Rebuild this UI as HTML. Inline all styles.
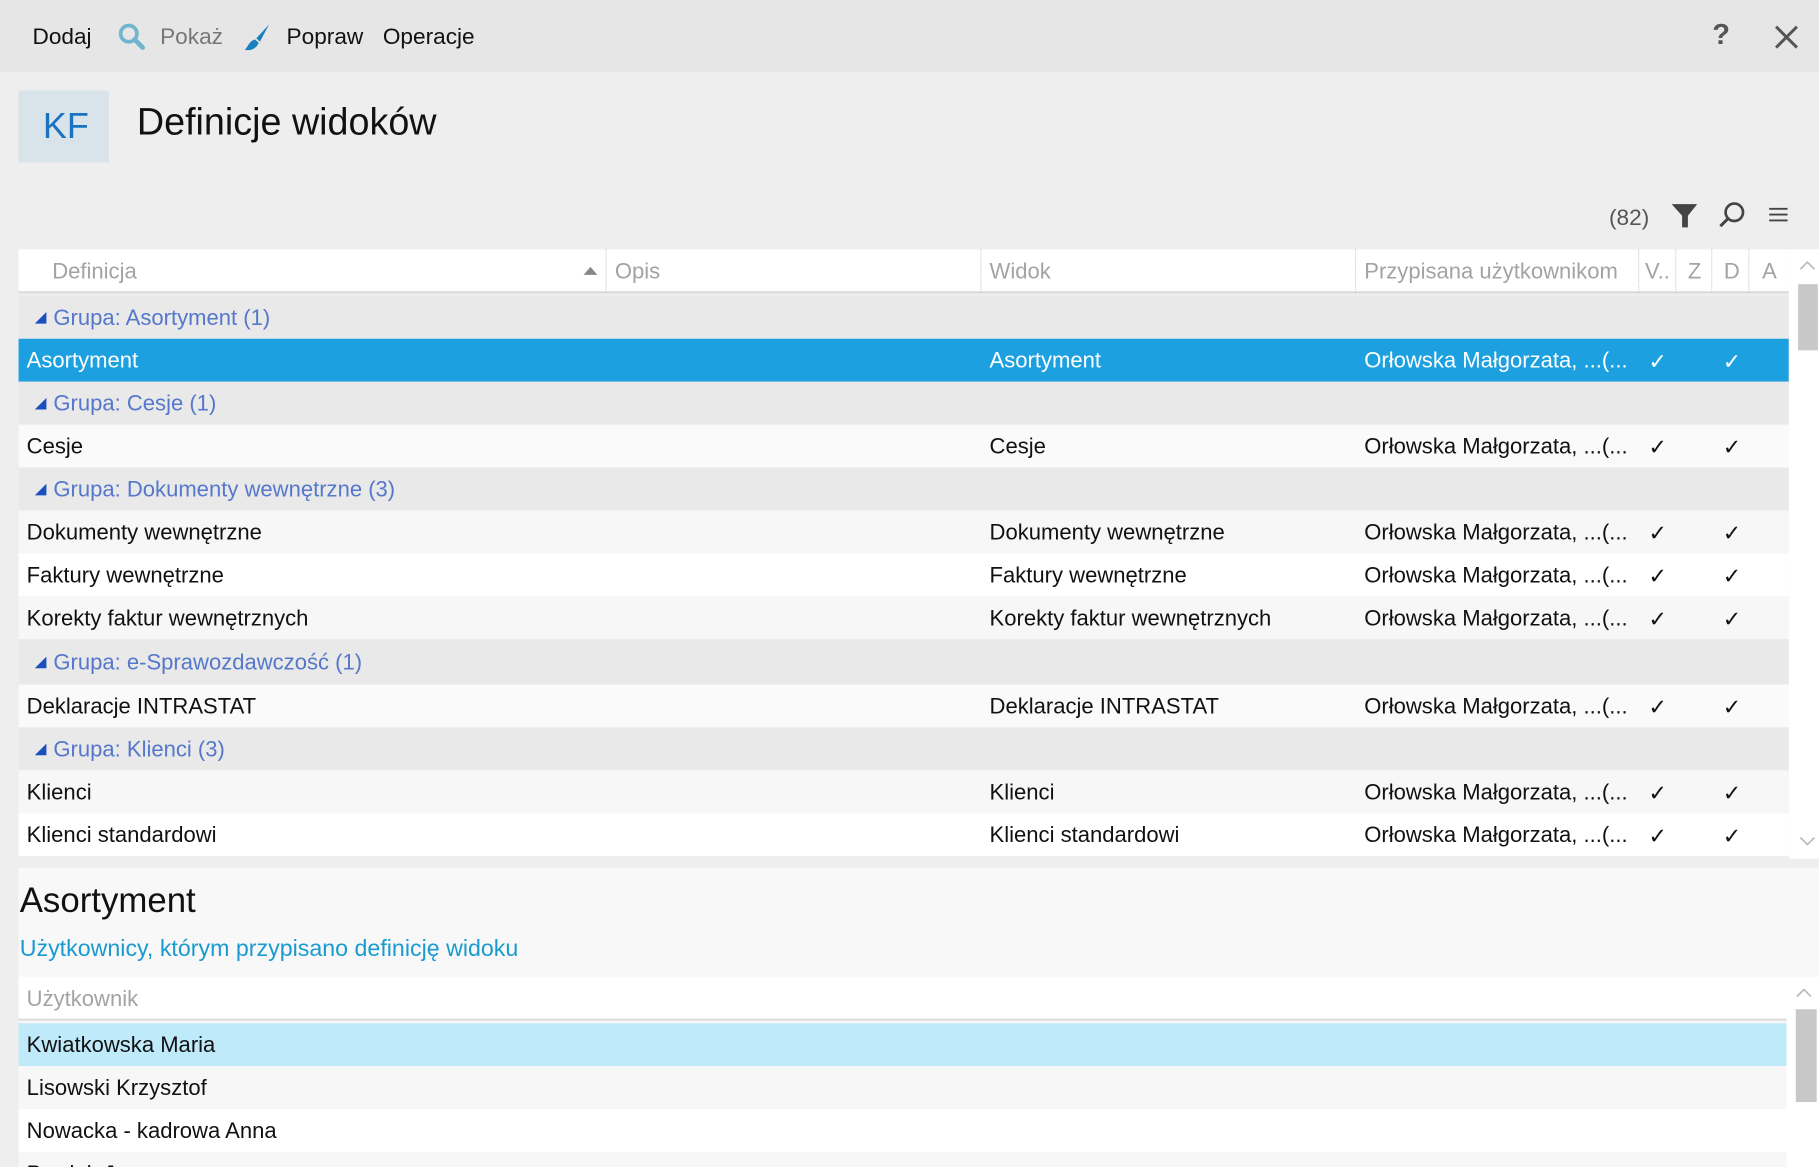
<!DOCTYPE html>
<html><head><meta charset="utf-8"><style>
html,body{margin:0;padding:0;width:1819px;height:1167px;overflow:hidden;background:#eeeeee}
#w{position:absolute;left:0;top:0;width:1568px;height:1006px;transform:scale(1.16007);transform-origin:0 0;font-family:"Liberation Sans",sans-serif;background:#eeeeee;overflow:hidden}
.a{position:absolute;white-space:nowrap}
.tb{left:0;top:0;width:1568px;height:62px;background:#e6e6e6}
.t{font-size:19.5px;color:#111;top:21px}
.row{position:absolute;left:16px;width:1526px;height:37px}
.row span{position:absolute;top:9px;font-size:19px;color:#111;white-space:nowrap}
.g{background:#e9e9e9}
.g span{color:#5577cc;left:30px}
.g i{position:absolute;left:14px;top:14px;width:0;height:0;border-left:10px solid transparent;border-bottom:10px solid #1a4fc0}
.h{font-size:19px;color:#a3a3a3;top:224px}
.sep{position:absolute;top:215px;height:37px;border-left:1px dotted #ccc}
.ck{font-size:18px}
</style></head><body><div id="w">
<div class="a tb"></div>
<div class="a t" style="left:28px">Dodaj</div>
<svg class="a" style="left:101px;top:19px" width="26" height="26" viewBox="0 0 26 26"><circle cx="10" cy="10" r="7" fill="none" stroke="#6fb6cc" stroke-width="3.2"/><line x1="15" y1="15" x2="22" y2="22" stroke="#6fb6cc" stroke-width="4" stroke-linecap="round"/></svg>
<div class="a t" style="left:138px;color:#777">Pokaż</div>
<svg class="a" style="left:209px;top:19px" width="26" height="26" viewBox="0 0 26 26"><path d="M23 2 L12 14 L15 17 Z" fill="#1a80c0"/><path d="M11 15 L14 18 C12 23 7 25 2 24 C5 21 6 16 11 15 Z" fill="#1a80c0"/></svg>
<div class="a t" style="left:247px">Popraw</div>
<div class="a t" style="left:330px">Operacje</div>
<div class="a" style="left:1476px;top:16px;font-size:25px;font-weight:bold;color:#555">?</div>
<svg class="a" style="left:1529px;top:21px" width="22" height="22"><path d="M2 2L20 20M20 2L2 20" stroke="#555" stroke-width="2.6"/></svg>
<div class="a" style="left:16px;top:78px;width:78px;height:62px;background:#d9e3ea"></div>
<div class="a" style="left:37px;top:91px;font-size:31px;color:#1a73c0">KF</div>
<div class="a" style="left:118px;top:87px;font-size:32.5px;color:#111">Definicje widoków</div>
<div class="a" style="left:1387px;top:177px;font-size:19.5px;color:#555">(82)</div>
<svg class="a" style="left:1440px;top:174px" width="24" height="24"><path d="M1 2H23L15 12V22H10V12Z" fill="#444"/></svg>
<svg class="a" style="left:1480px;top:173px" width="26" height="26"><circle cx="15" cy="10" r="7.5" fill="none" stroke="#444" stroke-width="2.3"/><line x1="9.5" y1="15.5" x2="3" y2="22" stroke="#444" stroke-width="2.6"/></svg>
<svg class="a" style="left:1525px;top:178px" width="16" height="14"><path d="M0 2H16M0 7H16M0 12H16" stroke="#444" stroke-width="1.6"/></svg>
<div class="a" style="left:16px;top:215px;width:1526px;height:36px;background:#fff;border-bottom:2px solid #ddd"></div>
<div class="a h" style="left:45px">Definicja</div>
<div class="a" style="left:503px;top:230px;border-left:6px solid transparent;border-right:6px solid transparent;border-bottom:7px solid #888"></div>
<div class="sep" style="left:522px"></div><div class="sep" style="left:845px"></div><div class="sep" style="left:1168px"></div><div class="sep" style="left:1412px"></div><div class="sep" style="left:1444px"></div><div class="sep" style="left:1475px"></div><div class="sep" style="left:1507px"></div>
<div class="a h" style="left:530px">Opis</div><div class="a h" style="left:853px">Widok</div><div class="a h" style="left:1176px">Przypisana użytkownikom</div><div class="a h" style="left:1418px">V..</div><div class="a h" style="left:1455px">Z</div><div class="a h" style="left:1486px">D</div><div class="a h" style="left:1519px">A</div>

<div class="row g" style="top:255px"><i></i><span>Grupa: Asortyment (1)</span></div>
<div class="row" style="top:292px;background:#1ca0e0"><span style="left:7px;color:#fff">Asortyment</span><span style="left:837px;color:#fff">Asortyment</span><span style="left:1160px;color:#fff">Orłowska Małgorzata, ...(...</span><span class="ck" style="left:1405px;color:#fff">✓</span><span class="ck" style="left:1469px;color:#fff">✓</span></div>
<div class="row g" style="top:329px"><i></i><span>Grupa: Cesje (1)</span></div>
<div class="row" style="top:366px;background:#fafafa"><span style="left:7px">Cesje</span><span style="left:837px">Cesje</span><span style="left:1160px">Orłowska Małgorzata, ...(...</span><span class="ck" style="left:1405px">✓</span><span class="ck" style="left:1469px">✓</span></div>
<div class="row g" style="top:403px"><i></i><span>Grupa: Dokumenty wewnętrzne (3)</span></div>
<div class="row" style="top:440px;background:#f7f7f7"><span style="left:7px">Dokumenty wewnętrzne</span><span style="left:837px">Dokumenty wewnętrzne</span><span style="left:1160px">Orłowska Małgorzata, ...(...</span><span class="ck" style="left:1405px">✓</span><span class="ck" style="left:1469px">✓</span></div>
<div class="row" style="top:477px;background:#fff"><span style="left:7px">Faktury wewnętrzne</span><span style="left:837px">Faktury wewnętrzne</span><span style="left:1160px">Orłowska Małgorzata, ...(...</span><span class="ck" style="left:1405px">✓</span><span class="ck" style="left:1469px">✓</span></div>
<div class="row" style="top:514px;background:#f7f7f7"><span style="left:7px">Korekty faktur wewnętrznych</span><span style="left:837px">Korekty faktur wewnętrznych</span><span style="left:1160px">Orłowska Małgorzata, ...(...</span><span class="ck" style="left:1405px">✓</span><span class="ck" style="left:1469px">✓</span></div>
<div class="row g" style="top:551px;height:39px"><i style="top:15px"></i><span style="top:10px">Grupa: e-Sprawozdawczość (1)</span></div>
<div class="row" style="top:590px;background:#fafafa"><span style="left:7px">Deklaracje INTRASTAT</span><span style="left:837px">Deklaracje INTRASTAT</span><span style="left:1160px">Orłowska Małgorzata, ...(...</span><span class="ck" style="left:1405px">✓</span><span class="ck" style="left:1469px">✓</span></div>
<div class="row g" style="top:627px"><i></i><span>Grupa: Klienci (3)</span></div>
<div class="row" style="top:664px;background:#f7f7f7"><span style="left:7px">Klienci</span><span style="left:837px">Klienci</span><span style="left:1160px">Orłowska Małgorzata, ...(...</span><span class="ck" style="left:1405px">✓</span><span class="ck" style="left:1469px">✓</span></div>
<div class="row" style="top:701px;background:#fff"><span style="left:7px">Klienci standardowi</span><span style="left:837px">Klienci standardowi</span><span style="left:1160px">Orłowska Małgorzata, ...(...</span><span class="ck" style="left:1405px">✓</span><span class="ck" style="left:1469px">✓</span></div>
<div class="a" style="left:1542px;top:215px;width:26px;height:525px;background:#fff"></div>
<svg class="a" style="left:1551px;top:224px" width="14" height="10"><path d="M1 8L7 2L13 8" fill="none" stroke="#bbb" stroke-width="1.5"/></svg>
<div class="a" style="left:1550px;top:245px;width:17px;height:57px;background:#c8c8c8"></div>
<svg class="a" style="left:1551px;top:720px" width="14" height="10"><path d="M1 2L7 8L13 2" fill="none" stroke="#bbb" stroke-width="1.5"/></svg>

<div class="a" style="left:16px;top:748px;width:1552px;height:258px;background:#f8f8f8"></div>
<div class="a" style="left:17px;top:760px;font-size:30px;color:#111">Asortyment</div>
<div class="a" style="left:17px;top:807px;font-size:20px;color:#1a9bd0">Użytkownicy, którym przypisano definicję widoku</div>
<div class="a" style="left:16px;top:842px;width:1524px;height:36px;background:#fff;border-bottom:2px solid #ddd"></div>
<div class="a" style="left:23px;top:851px;font-size:19px;color:#a3a3a3">Użytkownik</div>
<div class="row" style="top:882px;width:1524px;background:#bfeafa"><span style="left:7px">Kwiatkowska Maria</span></div>
<div class="row" style="top:919px;width:1524px;background:#f7f7f7"><span style="left:7px">Lisowski Krzysztof</span></div>
<div class="row" style="top:956px;width:1524px;background:#fff"><span style="left:7px">Nowacka - kadrowa Anna</span></div>
<div class="row" style="top:993px;width:1524px;background:#f7f7f7"><span style="left:7px">Pawlak Joanna</span></div>
<div class="a" style="left:1540px;top:842px;width:28px;height:164px;background:#fff"></div>
<svg class="a" style="left:1548px;top:851px" width="14" height="10"><path d="M1 8L7 2L13 8" fill="none" stroke="#bbb" stroke-width="1.5"/></svg>
<div class="a" style="left:1548px;top:870px;width:18px;height:80px;background:#c8c8c8"></div>
</div></body></html>
